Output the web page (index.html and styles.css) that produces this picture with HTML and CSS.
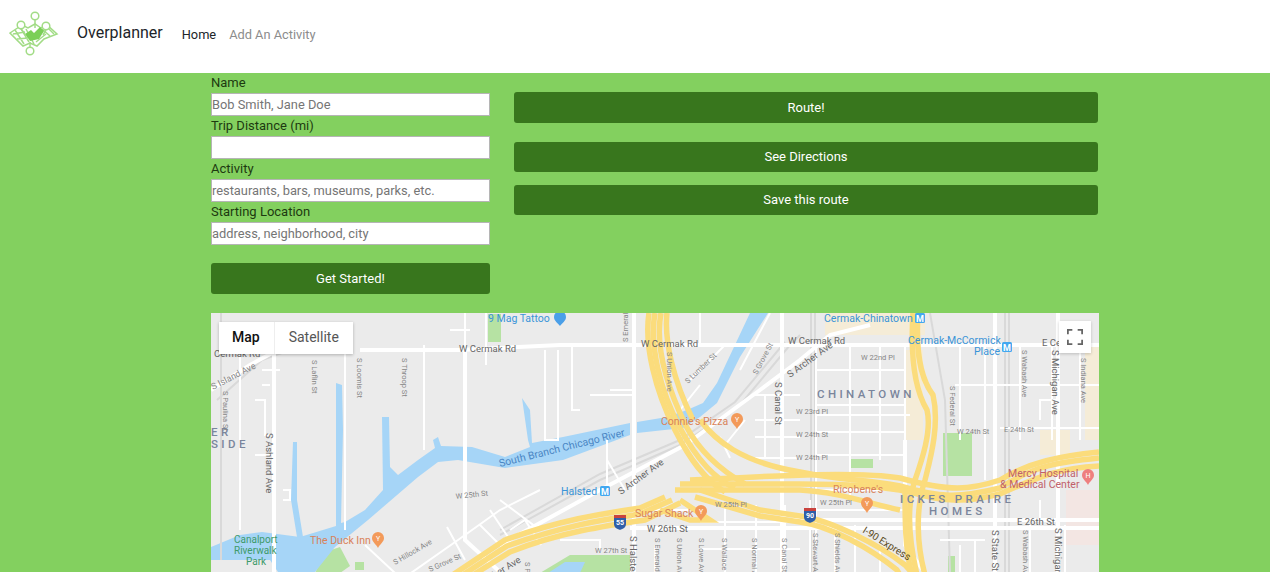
FILE: index.html
```html
<!DOCTYPE html>
<html lang="en">
<head>
    <meta charset="UTF-8">
    <meta name="viewport" content="width=device-width, initial-scale=1.0">
    <title>Overplanner</title>
    <link rel="stylesheet" href="styles.css">
</head>
<body>
    <nav class="navbar">
        <svg class="logo" viewBox="8 8 52 48" width="52" height="48">
            <g fill="none" stroke="#a2dc86" stroke-width="1.5">
                <path d="M10 32L22 24L28 27L35 23L41 27L47 24L57 33L44 38L37 45L30 42L23 45Z"/>
                <path d="M15 29L24 43M20 26L29 41M26 28L34 43M42 28L50 35M47 26L54 33M13 33L25 31M17 38L28 37M36 41L46 33"/>
                <circle cx="35" cy="15" r="3.8" fill="#fff"/>
                <circle cx="21" cy="24" r="3.8" fill="#fff"/>
                <circle cx="46" cy="25" r="3.8" fill="#fff"/>
                <circle cx="30" cy="50" r="3.8" fill="#fff"/>
                <path d="M35 19V27M21 28L25 33M46 29L43 34M30 46V41"/>
            </g>
            <path d="M25 33L31 29L34 32L40 26L44 30L39 38L30 40Z" fill="#7bcf57"/>
        </svg>
        <a class="brand" href="#">Overplanner</a>
        <a class="nav-link active" href="#">Home</a>
        <a class="nav-link" href="#">Add An Activity</a>
    </nav>

    <div class="container">
        <div class="top-row">
            <form class="trip-form">
                <label for="name">Name</label>
                <input type="text" id="name" placeholder="Bob Smith, Jane Doe">
                <label for="distance">Trip Distance (mi)</label>
                <input type="text" id="distance">
                <label for="activity">Activity</label>
                <input type="text" id="activity" placeholder="restaurants, bars, museums, parks, etc.">
                <label for="start">Starting Location</label>
                <input type="text" id="start" placeholder="address, neighborhood, city">
                <button type="button" class="btn btn-start">Get Started!</button>
            </form>
            <div class="route-actions">
                <button type="button" class="btn btn-route">Route!</button>
                <button type="button" class="btn">See Directions</button>
                <button type="button" class="btn">Save this route</button>
            </div>
        </div>

        <div class="map">
            <svg class="map-canvas" viewBox="211 313 888 262" width="888" height="262">
                <rect x="211" y="313" width="888" height="262" fill="#ebebeb"/>

                <!-- blocks east of the river -->
                <g fill="#f5ecd7">
                    <rect x="825" y="313" width="100" height="22"/>
                    <rect x="905" y="350" width="18" height="90"/>
                    <rect x="1040" y="430" width="30" height="25"/>
                    <rect x="1085" y="345" width="14" height="95"/>
                </g>
                <rect x="1066" y="490" width="33" height="55" fill="#f3e6e3"/>

                <!-- parks -->
                <g fill="#b6e2a3">
                    <rect x="488" y="314" width="13" height="28"/>
                    <path d="M943 433H972V476H943Z"/>
                    <path d="M850 459H873V468H850Z"/>
                    <path d="M948 556H955V573H948Z"/>
                    <path d="M315 573L325 552L340 547L350 566L340 573Z"/>
                    <path d="M540 573L570 555H630V573Z"/>
                    <rect x="355" y="562" width="9" height="8"/>
                </g>

                <!-- water -->
                <g fill="#a6d5f7">
                    <path d="M211 547L240 535L262 532L300 537L336 526L336 383L342 385L343 430L341 523L345 522L365 510L383 490L382 417L389 417L390 467L398 475L418 460L435 448L433 440L438 437L441 446L472 447L505 457L530 447L528 440L522 398L530 410L532 443L563 437L630 423V435L563 460L505 468L458 460L438 462L418 477L368 520L335 547L315 572H278L270 560L211 560Z"/>
                    <path d="M293 442H297V500L303 537H297L291 500Z"/>
                    <path d="M637 422L667 417L687 410L703 403L717 383L750 313H768L740 357L717 403L700 417L683 428L637 433Z"/>
                    <path d="M548 573L565 562H585L580 573Z"/>
                </g>

                <!-- rail lines -->
                <g fill="none" stroke="#d9d9d9" stroke-width="2">
                    <path d="M500 535L600 480L680 445L740 405L790 345L800 335"/>
                    <path d="M500 530L600 474L680 440L735 402L785 342"/>
                    <path d="M217 400L262 360L290 350"/>
                    <path d="M221 313V560"/>
                    <path d="M811 313V575M815 313V575"/>
                    <path d="M1005 313V575M1009 313V575"/>
                    <path d="M930 313L945 400L950 573"/>
                </g>

                <!-- streets -->
                <g fill="none" stroke="#fff" stroke-width="2">
                    <path d="M240 345V530M345 345V530M424 345V450"/>
                    <path d="M465 313V365M486 313V365M450 330H470"/>
                    <path d="M262 370H280M262 385H270M255 400H265V435H270M255 455H275M283 490H290V500H283"/>
                    <path d="M545 350V440H558V350M572 345V410H580M590 395H635M610 390H635"/>
                    <path d="M680 410L700 385M690 380L725 345M700 345V313M770 313L740 370"/>
                    <path d="M510 530L525 520L541 545M500 500L540 530"/>
                    <path d="M411 573L458 540L500 510L540 490M447 527L465 560M480 525L505 550M490 510L510 540M365 545L395 573"/>
                    <path d="M607 440V490M607 460L625 490M640 510H690M655 545V573H680M560 540H600V552"/>
                    <path d="M725 445L745 420M755 395H800M755 437H800M755 458H800M765 395V458M720 437L730 458M755 420H800"/>
                    <path d="M725 505V573M756 505V573M785 505V573M810 500V573M700 522H800M700 549H800"/>
                    <path d="M816 345V560M850 345V500M880 345V460M905 345V460M816 370H905M816 405H905M816 415H910M816 432H905M816 455H905M816 490H905M816 510H905M835 525V573M855 525V573M880 545V573"/>
                    <path d="M960 343V440M985 343V480M1020 343V440M1052 343V440M1080 343V440M955 385H1099M1000 428H1099M960 545V573M985 540H975V573M1030 525V573M1065 525V573"/>
                    <path d="M940 540H975V573M1040 420V400H1060M1040 500V520"/>
                </g>
                <g fill="none" stroke="#fff" stroke-width="4">
                    <path d="M360 350L460 350L560 345L640 345H1099"/>
                    <path d="M274 345V573"/>
                    <path d="M211 390L250 365L274 352L290 345"/>
                    <path d="M465 350V540L500 572"/>
                    <path d="M634 313V573"/>
                    <path d="M500 545L600 490L685 445L760 390L800 360L830 335L870 325"/>
                    <path d="M782 313V573"/>
                    <path d="M630 528H1099"/>
                    <path d="M995 313V573M1058 313V573"/>
                    <path d="M905 440V545L925 573"/>
                    <path d="M790 520H1099"/>
                </g>

                <!-- expressways -->
                <g fill="none" stroke="#fbdc7c" stroke-width="5.5">
                    <path d="M445 580L505 540C560 520 600 514 640 508L665 497"/>
                    <path d="M455 580L507 546C560 527 600 520 640 514L672 500"/>
                    <path d="M465 580L510 552C560 532 610 525 645 520L680 503"/>
                    <path d="M649 313C644 345 655 390 675 430C690 460 705 480 725 492"/>
                    <path d="M655 313C649 345 660 390 680 428C695 456 712 478 735 488"/>
                    <path d="M661 313C655 345 666 385 686 426C700 452 720 470 745 484"/>
                    <path d="M667 313C664 340 673 380 693 420"/>
                    <path d="M700 420C715 440 740 462 800 472C850 482 860 478 900 486C940 498 960 498 1000 488C1035 465 1060 462 1099 458"/>
                    <path d="M690 480C740 478 850 470 900 478C950 492 970 490 1000 480C1030 462 1060 456 1099 452"/>
                    <path d="M680 484H800C850 484 880 486 910 492C950 505 975 500 1000 494C1040 476 1060 468 1099 466"/>
                    <path d="M675 490H800C840 492 870 504 900 510"/>
                    <path d="M680 500L710 520H690L660 510"/>
                    <path d="M700 490L760 510L800 516C830 520 880 545 905 565L914 575"/>
                    <path d="M695 497L760 516L800 522C830 526 870 548 897 570L900 575"/>
                    <path d="M918 313C916 345 918 375 933 395C940 425 930 460 925 480C915 510 917 545 925 575"/>
                    <path d="M913 313C911 345 912 385 927 410C932 430 922 460 915 480C905 510 910 545 917 575"/>
                    <path d="M905 490C905 520 905 550 912 575"/>
                </g>

                <!-- shields and pins -->
                <path d="M614 517H626V524C626 528 622 529 620 530C618 529 614 528 614 524Z" fill="#2f5fa8"/>
                <rect x="614" y="515" width="12" height="3" fill="#c9433e"/>
                <text class="shield" x="620" y="525">55</text>
                <path d="M804 510H816V517C816 521 812 522 810 523C808 522 804 521 804 517Z" fill="#2f5fa8"/>
                <rect x="804" y="508" width="12" height="3" fill="#c9433e"/>
                <text class="shield" x="810" y="518">90</text>

                <g fill="#f39a5a">
                    <path d="M372 538a6 6 0 1 1 12 0c0 4-4 6-6 10c-2-4-6-6-6-10Z"/>
                    <path d="M731 419a6 6 0 1 1 12 0c0 4-4 6-6 10c-2-4-6-6-6-10Z"/>
                    <path d="M695 511a6 6 0 1 1 12 0c0 4-4 6-6 10c-2-4-6-6-6-10Z"/>
                    <path d="M861 503a6 6 0 1 1 12 0c0 4-4 6-6 10c-2-4-6-6-6-10Z"/>
                </g>
                <path d="M1082 475a6 6 0 1 1 12 0c0 4-4 6-6 10c-2-4-6-6-6-10Z" fill="#ee7f7f"/>
                <path d="M554 317a6 6 0 1 1 12 0c0 4-4 6-6 9c-2-3-6-5-6-9Z" fill="#4a9fe8"/>
                <g fill="#fff" font-size="7" text-anchor="middle" font-family="Roboto, sans-serif">
                    <text x="378" y="541">Y</text>
                    <text x="737" y="422">Y</text>
                    <text x="701" y="514">Y</text>
                    <text x="867" y="506">Y</text>
                    <text x="1088" y="478">H</text>
                </g>

                <!-- transit badges -->
                <g fill="#43a8f0">
                    <rect x="600" y="486" width="10" height="10" rx="1.5"/>
                    <rect x="915" y="313" width="10" height="10" rx="1.5"/>
                    <rect x="1002" y="342" width="10" height="10" rx="1.5"/>
                </g>
                <g fill="#fff" font-size="9" text-anchor="middle" font-family="Roboto, sans-serif" font-weight="700">
                    <text x="605" y="494.500">M</text>
                    <text x="920" y="321.500">M</text>
                    <text x="1007" y="350.500">M</text>
                </g>

                <!-- labels -->
                <g class="poi-blue">
                    <text x="488" y="322">9 Mag Tattoo</text>
                    <text x="561" y="495">Halsted</text>
                    <text x="824" y="322">Cermak-Chinatown</text>
                    <text x="908" y="344">Cermak-McCormick</text>
                    <text x="974" y="355">Place</text>
                </g>
                <text class="water-label" transform="translate(500 467) rotate(-14)">South Branch Chicago River</text>
                <g class="poi-orange">
                    <text x="310" y="544">The Duck Inn</text>
                    <text x="661" y="425">Connie's Pizza</text>
                    <text x="635" y="517">Sugar Shack</text>
                    <text x="833" y="493">Ricobene's</text>
                </g>
                <g class="poi-red">
                    <text x="1008" y="477">Mercy Hospital</text>
                    <text x="1000" y="488">&amp; Medical Center</text>
                </g>
                <g class="poi-green">
                    <text x="234" y="543">Canalport</text>
                    <text x="234" y="554">Riverwalk</text>
                    <text x="246" y="565">Park</text>
                </g>
                <g class="area">
                    <text x="817" y="398">CHINATOWN</text>
                    <text x="900" y="503">ICKES PRAIRE</text>
                    <text x="929" y="515">HOMES</text>
                    <text x="211" y="436">ER</text>
                    <text x="211" y="448">SIDE</text>
                </g>
                <g class="road">
                    <text x="214" y="357">Cermak Rd</text>
                    <text x="459" y="352">W Cermak Rd</text>
                    <text x="641" y="347">W Cermak Rd</text>
                    <text x="788" y="344">W Cermak Rd</text>
                    <text x="1042" y="346">E Cermak</text>
                    <text x="647" y="532">W 26th St</text>
                    <text x="1017" y="525">E 26th St</text>
                </g>
                <g class="street">
                    <text x="456" y="499" transform="rotate(-6 456 499)">W 25th St</text>
                    <text x="715" y="507">W 25th Pl</text>
                    <text x="820" y="505">W 25th Pl</text>
                    <text x="595" y="553">W 27th St</text>
                    <text x="861" y="360">W 22nd Pl</text>
                    <text x="796" y="414">W 23rd Pl</text>
                    <text x="796" y="437">W 24th St</text>
                    <text x="796" y="460">W 24th Pl</text>
                    <text x="957" y="434">W 24th St</text>
                    <text x="1004" y="432">E 24th St</text>
                </g>
                <g class="street-v">
                    <text class="island" transform="translate(213 390) rotate(-27)">S Island Ave</text>
                    <text transform="translate(223 391) rotate(90)">S Paulina St</text>
                    <text transform="translate(312 360) rotate(90)">S Laflin St</text>
                    <text transform="translate(357 358) rotate(90)">S Loomis St</text>
                    <text transform="translate(402 358) rotate(90)">S Throop St</text>
                    <text transform="translate(395 565) rotate(-30)">S Hillock Ave</text>
                    <text transform="translate(430 572) rotate(-24)">S Grove St</text>
                    <text transform="translate(667 352) rotate(90)">S Union Ave</text>
                    <text transform="translate(688 384) rotate(-44)">S Lumber St</text>
                    <text transform="translate(757 375) rotate(-62)">S Grove St</text>
                    <text transform="translate(628 342) rotate(-90)">S Emerald</text>
                    <text transform="translate(655 538) rotate(90)">S Emerald Ave</text>
                    <text transform="translate(677 538) rotate(90)">S Union Ave</text>
                    <text transform="translate(699 538) rotate(90)">S Lowe Ave</text>
                    <text transform="translate(722 538) rotate(90)">S Wallace St</text>
                    <text transform="translate(752 538) rotate(90)">S Normal Ave</text>
                    <text transform="translate(782 538) rotate(90)">S Canal St</text>
                    <text transform="translate(525 562) rotate(90)">S Poplar</text>
                    <text transform="translate(950 386) rotate(90)">S Federal St</text>
                    <text transform="translate(1022 350) rotate(90)">S Wabash Ave</text>
                    <text transform="translate(1081 358) rotate(90)">S Indiana Ave</text>
                    <text transform="translate(813 533) rotate(90)">S Stewart Ave</text>
                    <text transform="translate(835 533) rotate(90)">S Shields Ave</text>
                    <text transform="translate(1023 530) rotate(90)">S Wabash Ave</text>
                </g>
                <g class="road-v">
                    <text transform="translate(266 433) rotate(90)">S Ashland Ave</text>
                    <text transform="translate(630 536) rotate(90)">S Halsted St</text>
                    <text transform="translate(775 382) rotate(90)">S Canal St</text>
                    <text transform="translate(1052 350) rotate(90)">S Michigan Ave</text>
                    <text transform="translate(992 530) rotate(90)">S State St</text>
                    <text transform="translate(1055 528) rotate(90)">S Michigan Ave</text>
                    <text transform="translate(621 495) rotate(-36)">S Archer Ave</text>
                    <text transform="translate(790 378) rotate(-36)">S Archer Ave</text>
                    <text transform="translate(476 590) rotate(-32)">S Archer Ave</text>
                </g>
                <text class="express" transform="translate(862 532) rotate(32)">I-90 Express</text>
            </svg>

            <div class="map-types">
                <span class="map-type selected">Map</span>
                <span class="map-type">Satellite</span>
            </div>
            <div class="fullscreen">
                <svg viewBox="0 0 18 18" width="16" height="16">
                    <path d="M1 6V1H6M12 1H17V6M17 12V17H12M6 17H1V12" fill="none" stroke="#666" stroke-width="2"/>
                </svg>
            </div>
        </div>
    </div>
</body>
</html>
```

FILE: styles.css
```css
* {
    box-sizing: border-box;
}
html {
    background-color: #ffffff;
}
body {
    margin: 0;
    height: 572px;
    overflow: hidden;
    font-family: Roboto, sans-serif;
    background-color: #83d05f;
}
.navbar {
    display: flex;
    align-items: center;
    height: 73px;
    padding-left: 8px;
    padding-bottom: 4px;
    background-color: #ffffff;
}
.logo {
    margin-right: 17px;
    margin-top: -3px;
}
.brand {
    margin-right: 19px;
    margin-top: -4px;
    font-size: 16px;
    color: #212529;
    text-decoration: none;
}
.nav-link {
    margin-right: 13px;
    font-size: 12.8px;
    color: #8c8c8c;
    text-decoration: none;
}
.nav-link.active {
    color: #212529;
}
.container {
    width: 888px;
    margin-left: 211px;
}
.top-row {
    display: flex;
    gap: 24px;
    height: 240px;
}
.trip-form {
    display: flex;
    flex-direction: column;
    width: 279px;
}
label {
    height: 20px;
    font-size: 13px;
    line-height: 19px;
    color: #1d3a10;
}
input {
    width: 279px;
    height: 23px;
    padding: 0;
    border: 1px solid #b5b5b5;
    border-radius: 0;
    font-family: Roboto, sans-serif;
    font-size: 12.85px;
    background-color: #ffffff;
}
input::placeholder {
    color: #757575;
}
.btn {
    display: block;
    width: 100%;
    height: 30px;
    padding: 0 0 2px;
    border: none;
    border-radius: 3px;
    font-family: Roboto, sans-serif;
    font-size: 13px;
    color: #ffffff;
    background-color: #38761d;
    cursor: pointer;
}
.btn-start {
    height: 31px;
    padding-bottom: 0;
    margin-top: 18px;
}
.route-actions {
    display: flex;
    flex-direction: column;
    gap: 13px;
    width: 584px;
    padding-top: 19px;
}
.btn-route {
    height: 31px;
    padding-bottom: 1px;
    margin-bottom: 6px;
}
.map {
    position: relative;
    height: 262px;
}
.map-canvas {
    display: block;
}
.map-types {
    position: absolute;
    top: 9px;
    left: 8px;
    display: flex;
    height: 32px;
    background-color: #ffffff;
    box-shadow: 0 1px 3px rgba(0, 0, 0, 0.25);
}
.map-type {
    padding: 0 14px;
    font-size: 14px;
    line-height: 31px;
    color: #565656;
}
.map-type.selected {
    padding: 0 14px 0 13px;
    font-weight: 500;
    color: #111111;
    border-right: 1px solid #eeeeee;
}
.fullscreen {
    position: absolute;
    top: 8px;
    right: 8px;
    display: flex;
    align-items: center;
    justify-content: center;
    width: 32px;
    height: 32px;
    background-color: #ffffff;
    box-shadow: 0 1px 3px rgba(0, 0, 0, 0.2);
}
.map-canvas text {
    font-family: Roboto, sans-serif;
}
.poi-blue text {
    font-size: 10.5px;
    fill: #3a94d8;
}
.water-label {
    font-size: 10.5px;
    fill: #4a86c4;
}
.poi-orange text {
    font-size: 10.5px;
    fill: #d9825a;
}
.poi-red text {
    font-size: 10.5px;
    fill: #c0606a;
}
.poi-green text {
    font-size: 10px;
    fill: #3e9a6a;
}
.area text {
    font-size: 11.5px;
    font-weight: 500;
    letter-spacing: 3.4px;
    fill: #7a859c;
}
.road text,
.road-v text {
    font-size: 9.5px;
    fill: #666666;
}
.street text,
.street-v text {
    font-size: 7.5px;
    fill: #868686;
}
.street-v .island {
    font-size: 9px;
}
.express {
    font-size: 10px;
    fill: #5a4a20;
}
.shield {
    font-size: 7px;
    font-weight: 700;
    fill: #ffffff;
    text-anchor: middle;
}
```
